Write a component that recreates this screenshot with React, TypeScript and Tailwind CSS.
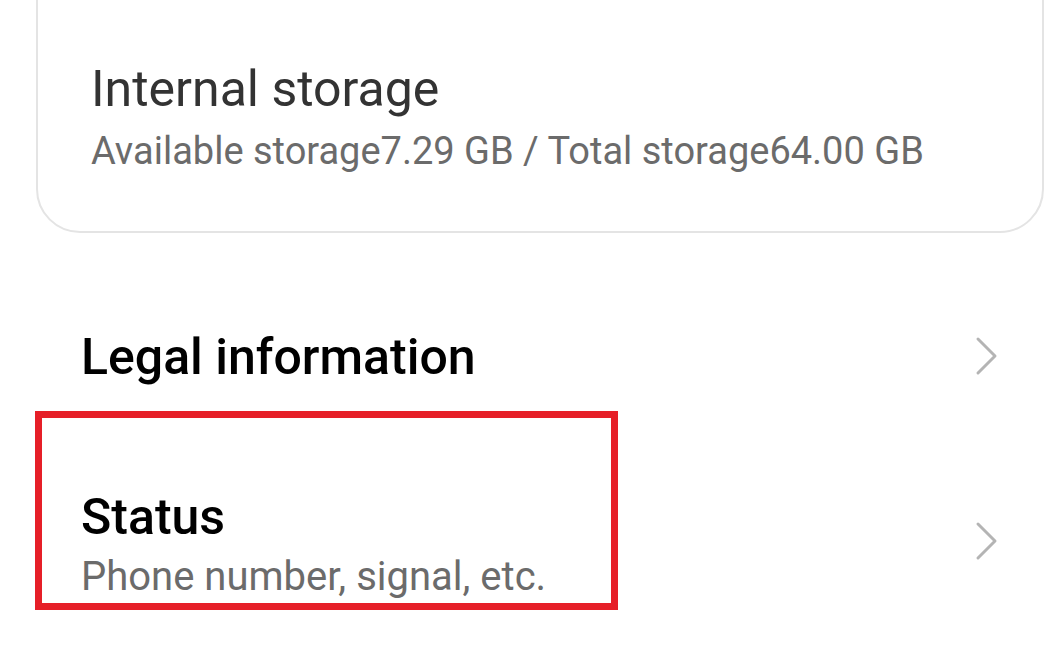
const Chevron = () => (
    <svg width="24" height="40" viewBox="0 0 24 40" fill="none" className="shrink-0">
        <polyline
            points="3,3 20,20 3,37"
            stroke="#b4b4b4"
            strokeWidth="3"
            strokeLinecap="round"
            strokeLinejoin="round"
        />
    </svg>
);

const App = () => {
    return (
        <div className="relative w-[1064px] h-[647px] overflow-hidden bg-white font-['Roboto',sans-serif]">
            <div className="ml-[36px] -mt-[60px] w-[1008px] h-[293px] rounded-[44px] border-2 border-[#e4e4e4] pl-[53px] pt-[118px]">
                <p className="text-[50px] leading-[58px] text-[#333333]">Internal storage</p>
                <p className="mt-[10px] text-[38px] leading-[46px] text-[#6b6b6b]">
                    Available storage7.29 GB / Total storage64.00 GB
                </p>
            </div>

            <ul>
                <li className="mt-[95px] flex h-[58px] items-center justify-between pl-[81px] pr-[65px]">
                    <span className="text-[50px] leading-[58px] font-medium text-black">Legal information</span>
                    <div className="mb-[2px]">
                        <Chevron />
                    </div>
                </li>
                <li className="mt-[102px] flex items-center justify-between pl-[81px] pr-[65px]">
                    <div className="flex flex-col">
                        <span className="text-[50px] leading-[58px] font-medium text-black">Status</span>
                        <span className="mt-[7px] text-[40px] leading-[48px] text-[#6b6b6b]">
                            Phone number, signal, etc.
                        </span>
                    </div>
                    <div className="mb-[8px]">
                        <Chevron />
                    </div>
                </li>
            </ul>

            {/* annotation frame drawn over the screenshot */}
            <div className="absolute left-[35px] top-[411px] w-[583px] h-[199px] border-[7px] border-[#e61f28]"></div>
        </div>
    );
};

export default App;
